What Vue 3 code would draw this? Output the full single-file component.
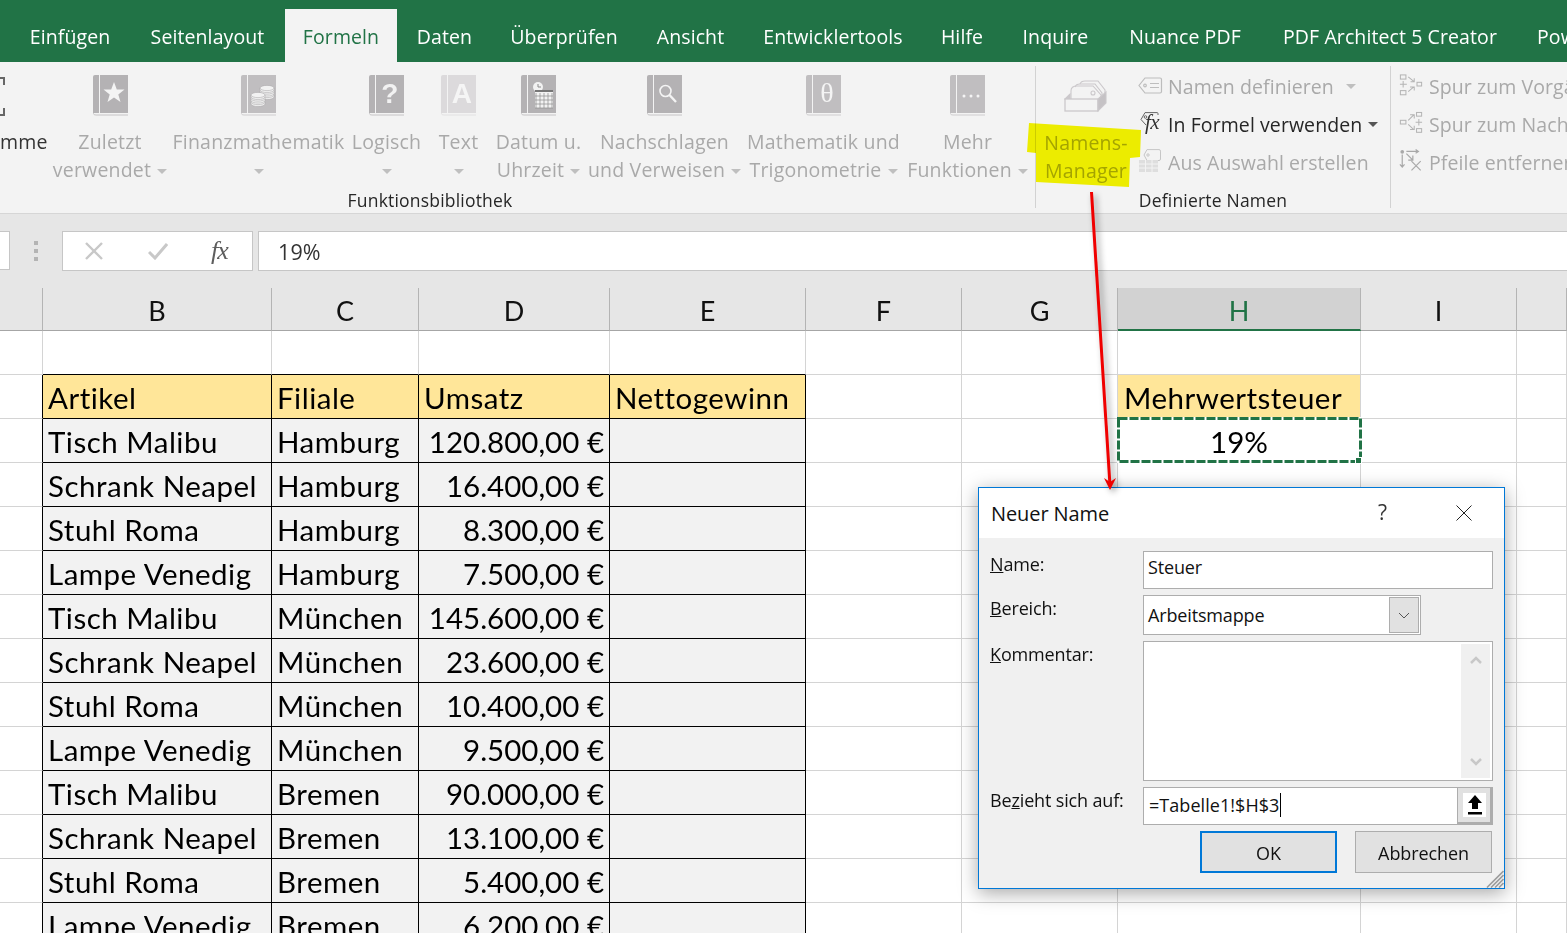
<script setup>
const tabs = [
  { t: 'Einfügen', w: 120 }, { t: 'Seitenlayout', w: 155 }, { t: 'Formeln', w: 112, active: true },
  { t: 'Daten', w: 95 }, { t: 'Überprüfen', w: 144 }, { t: 'Ansicht', w: 109 },
  { t: 'Entwicklertools', w: 176 }, { t: 'Hilfe', w: 82 }, { t: 'Inquire', w: 105 },
  { t: 'Nuance PDF', w: 154 }, { t: 'PDF Architect 5 Creator', w: 256 }, { t: 'Power Pivot', w: 120 }
]
const lib = [
  { w: 120, kind: 'star', fill: '#b4b2b4', a: 'Zuletzt', b: 'verwendet', caret: true },
  { w: 177, kind: 'coins', fill: '#c0bec0', a: 'Finanzmathematik', b: '', caret: true },
  { w: 79, kind: 'help', fill: '#b4b2b4', a: 'Logisch', b: '', caret: true },
  { w: 65, kind: 'letter', fill: '#dcdadc', a: 'Text', b: '', caret: true },
  { w: 95, kind: 'date', fill: '#b4b2b4', a: 'Datum u.', b: 'Uhrzeit', caret: true },
  { w: 157, kind: 'search', fill: '#b4b2b4', a: 'Nachschlagen', b: 'und Verweisen', caret: true },
  { w: 161, kind: 'theta', fill: '#c0bec0', a: 'Mathematik und', b: 'Trigonometrie', caret: true },
  { w: 127, kind: 'more', fill: '#c0bec0', a: 'Mehr', b: 'Funktionen', caret: true }
]
const coins = [[26, 20], [26, 16.5], [26, 13], [17, 27], [17, 23.5], [17, 20]]
const gridX = [15, 19, 23, 27, 31]
const gridY = [21, 25, 29, 33]

const colNames = ['', 'B', 'C', 'D', 'E', 'F', 'G', 'H', 'I', '']
const records = [
  ['Tisch Malibu', 'Hamburg', '120.800,00 €'], ['Schrank Neapel', 'Hamburg', '16.400,00 €'],
  ['Stuhl Roma', 'Hamburg', '8.300,00 €'], ['Lampe Venedig', 'Hamburg', '7.500,00 €'],
  ['Tisch Malibu', 'München', '145.600,00 €'], ['Schrank Neapel', 'München', '23.600,00 €'],
  ['Stuhl Roma', 'München', '10.400,00 €'], ['Lampe Venedig', 'München', '9.500,00 €'],
  ['Tisch Malibu', 'Bremen', '90.000,00 €'], ['Schrank Neapel', 'Bremen', '13.100,00 €'],
  ['Stuhl Roma', 'Bremen', '5.400,00 €'], ['Lampe Venedig', 'Bremen', '6.200,00 €']
]
const cells = []
for (let r = 1; r <= 14; r++) {
  const rec = r >= 3 ? records[r - 3] : null
  for (let c = 0; c < 10; c++) {
    const cls = []
    let text = ''
    if (c === 0 && r >= 2) cls.push('edge')
    if (c >= 1 && c <= 4) {
      if (r === 1) cls.push('top')
      else { cls.push('tbl', r === 2 ? 'head' : 'body') }
    }
    if (r === 2) text = ['', 'Artikel', 'Filiale', 'Umsatz', 'Nettogewinn'][c] || ''
    if (rec && c >= 1 && c <= 3) text = rec[c - 1]
    if (rec && c === 3) cls.push('num')
    if (c === 7 && r === 2) { cls.push('head', 'noline'); text = 'Mehrwertsteuer' }
    const ants = c === 7 && r === 3
    if (ants) { cls.push('center'); text = '19%' }
    cells.push({ id: r + '-' + c, text, cls, ants })
  }
}
</script>

<template>
  <div class="screen">
    <nav class="tabs">
      <div v-for="tab in tabs" :key="tab.t" class="tab" :class="{ active: tab.active }" :style="{ width: tab.w + 'px' }">{{ tab.t }}</div>
    </nav>

    <div class="ribbon">
      <section class="group library">
        <div class="cols">
          <div class="col first">
            <svg class="sigma" width="5" height="41" viewBox="0 0 5 41"><path d="M0 3h4v7M0 40h4v-7" fill="none" stroke="#666" stroke-width="2"/></svg>
            <div class="line dark">mme</div>
          </div>
          <div v-for="col in lib" :key="col.kind" class="col" :style="{ width: col.w + 'px' }">
            <svg class="book" width="35" height="41" viewBox="0 0 35 41">
              <path d="M2 0h4v38H0V2a2 2 0 0 1 2-2z" :fill="col.fill"/>
              <rect x="7" y="0" width="28" height="38" :fill="col.fill"/>
              <path d="M0 37c0 2 1 3 3 3h32" fill="none" :stroke="col.fill" stroke-width="1" opacity=".7"/>
              <polygon v-if="col.kind === 'star'" points="21,7 23.8,14.6 31.5,14.6 25.3,19.4 27.5,27 21,22.4 14.5,27 16.7,19.4 10.5,14.6 18.2,14.6" fill="#f4f4f4"/>
              <g v-if="col.kind === 'coins'">
                <g v-for="p in coins" :key="p[0] + '-' + p[1]">
                  <path :d="`M${p[0] - 7} ${p[1]}v2a7 2.600 0 0 0 14 0v-2z`" fill="#ececec" stroke="#a9a7a9" stroke-width=".5"/>
                  <ellipse :cx="p[0]" :cy="p[1]" rx="7" ry="2.600" fill="#f2f2f2" stroke="#a9a7a9" stroke-width=".5"/>
                </g>
              </g>
              <text v-if="col.kind === 'help'" x="21" y="28" text-anchor="middle" class="glyph-bold" fill="#f2f2f2">?</text>
              <text v-if="col.kind === 'letter'" x="21" y="28" text-anchor="middle" class="glyph-bold" fill="#f5f5f5">A</text>
              <g v-if="col.kind === 'date'">
                <circle cx="17" cy="12" r="5" fill="#f2f2f2"/>
                <path d="M17 9v3h3" fill="none" stroke="#8b8b8b" stroke-width="1"/>
                <rect x="14" y="17" width="18" height="16" fill="#f2f2f2"/>
                <path d="M14 16h18" stroke="#777" stroke-width="2"/>
                <path v-for="x in gridX" :key="'x' + x" :d="`M${x} 18v15`" stroke="#8d8d8d" stroke-width=".7"/>
                <path v-for="y in gridY" :key="'y' + y" :d="`M14 ${y}h18`" stroke="#8d8d8d" stroke-width=".7"/>
              </g>
              <g v-if="col.kind === 'search'" fill="none" stroke="#f4f4f4">
                <circle cx="18.500" cy="16" r="5.500" stroke-width="1.600"/>
                <path d="M22.500 20l6.500 7" stroke-width="2.400"/>
              </g>
              <text v-if="col.kind === 'theta'" x="21" y="27" text-anchor="middle" class="glyph-serif" fill="#f4f4f4">θ</text>
              <g v-if="col.kind === 'more'" fill="#f4f4f4">
                <circle cx="14" cy="21" r="1.500"/><circle cx="21" cy="21" r="1.500"/><circle cx="28" cy="21" r="1.500"/>
              </g>
            </svg>
            <div class="line">{{ col.a }}</div>
            <div class="line">{{ col.b }}<i v-if="col.caret" class="caret" :class="{ solo: !col.b }"></i></div>
          </div>
        </div>
        <div class="group-title lib-title">Funktionsbibliothek</div>
      </section>
      <i class="sep"></i>

      <section class="group defined">
        <div class="defined-row">
          <div class="manager">
            <svg class="drawer" width="44" height="33" viewBox="0 0 44 33" fill="none" stroke="#cbc8cb" stroke-width="1.100">
              <path d="M16 4q1-3 5-3h13l7 9v4"/>
              <path d="M11 7q1-3 5-3h15l7 9v4"/>
              <path d="M7 19v-8q0-5 6-5h16l8 9v3"/>
              <circle cx="29" cy="13" r="2"/>
              <path d="M1 19l5-5v5z" fill="#cbc8cb"/>
              <rect x="1" y="19" width="33" height="12" fill="#f3f3f3" stroke-width="1.300"/>
              <path d="M34 19l8-7v11l-8 8z" fill="#c5c2c5"/>
            </svg>
            <div class="line">Namens-</div>
            <div class="line">Manager</div>
          </div>
          <ul class="cmd-list">
            <li class="cmd">
              <svg class="cmd-icon" width="24" height="18" viewBox="0 0 24 18" fill="none" stroke="#bdbdbd" stroke-width="1.200">
                <path d="M7 1h15a1.500 1.500 0 0 1 1.500 1.500v12A1.500 1.500 0 0 1 22 16H7L1 8.500z"/>
                <circle cx="7" cy="8.500" r="1.300"/><path d="M12 6.500h9M12 10.500h9"/>
              </svg>
              <span>Namen definieren</span><i class="caret wide"></i>
            </li>
            <li class="cmd on">
              <svg class="cmd-icon" width="24" height="24" viewBox="0 0 24 24">
                <path d="M8 13L3 7.500 7 .6h12a1 1 0 0 1 1 1V3" fill="none" stroke="#666" stroke-width="1"/>
                <circle cx="7.500" cy="5" r="1.300" fill="none" stroke="#666"/>
                <text x="14" y="17" text-anchor="middle" class="fx-small" fill="#333">fx</text>
              </svg>
              <span>In Formel verwenden</span><i class="caret dark-caret"></i>
            </li>
            <li class="cmd">
              <svg class="cmd-icon raised" width="24" height="24" viewBox="0 0 24 24" fill="none" stroke="#c6c6c6">
                <path d="M9 .6h12a1.500 1.500 0 0 1 1.500 1.500v8A1.500 1.500 0 0 1 21 11.500H9L6 6z"/><circle cx="10" cy="6" r="1.200"/>
                <rect x="1" y="11" width="19" height="12" fill="#dedede" stroke="none"/>
                <path d="M1 15h19M1 19h19M7.500 11v12M14 11v12" stroke="#f3f3f3"/>
              </svg>
              <span>Aus Auswahl erstellen</span>
            </li>
          </ul>
        </div>
        <div class="group-title">Definierte Namen</div>
      </section>
      <i class="sep"></i>

      <section class="group trace">
        <ul class="cmd-list">
          <li class="cmd">
            <svg class="cmd-icon" width="26" height="26" viewBox="0 -1 26 26" fill="none" stroke="#b4b4b4" stroke-width="1.100">
              <rect x="1.500" y="0" width="6" height="4.500"/><rect x="1.500" y="17" width="6" height="4.500"/><rect x="19.500" y="8" width="5" height="4"/>
              <path d="M1 10h7.500M4.500 6.500v7M10 2l6 5M16.500 3.500V7.500h-4M10 18l6-5M12 13h4.500v4"/>
            </svg>
            <span>Spur zum Vorgängern</span>
          </li>
          <li class="cmd">
            <svg class="cmd-icon" width="26" height="26" viewBox="0 -1 26 26" fill="none" stroke="#b4b4b4" stroke-width="1.100">
              <rect x="1.500" y="8" width="6" height="4"/><rect x="19" y="-.5" width="5.500" height="4"/><rect x="19" y="17" width="5.500" height="4"/>
              <path d="M18 10h7M21.500 6.500v7M10 8l6-6M12 2h4.500v4M10 12.500l6 5.500M12 18h4.500v-4"/>
            </svg>
            <span>Spur zum Nachfolgern</span>
          </li>
          <li class="cmd">
            <svg class="cmd-icon" width="26" height="26" viewBox="0 0 26 26" fill="none" stroke="#a8a8a8" stroke-width="1.400">
              <circle cx="3.500" cy="2" r="2" fill="#a8a8a8" stroke="none"/>
              <path d="M8 1.500h13M18 -.5l3 2-3 2M3.500 5v13M1 15.500l2.500 3 2.500-3M8 4l7 7M15 6v5h-5M13.500 12l10 10M23.500 12l-10 10" stroke-width="1.300"/>
            </svg>
            <span>Pfeile entfernen</span>
          </li>
        </ul>
      </section>
    </div>

    <div class="formula-band">
      <div class="name-box"></div>
      <div class="grip"><b></b><b></b><b></b></div>
      <div class="fx-box">
        <svg width="18" height="18" viewBox="0 0 18 18"><path d="M1 1l16 16M17 1L1 17" stroke="#c8c8c8" stroke-width="2.400" fill="none"/></svg>
        <svg width="20" height="18" viewBox="0 0 20 18"><path d="M1 10l6 6L19 2" stroke="#c8c8c8" stroke-width="3" fill="none"/></svg>
        <span class="fx">fx</span>
      </div>
      <div class="formula-input">19%</div>
    </div>

    <div class="sheet">
      <div v-for="(name, i) in colNames" :key="'h' + i" class="col-head" :class="{ picked: name === 'H' }">{{ name }}</div>
      <div v-for="cell in cells" :key="cell.id" class="cell" :class="cell.cls">
        {{ cell.text }}
        <template v-if="cell.ants">
          <svg class="ants" width="245" height="46" viewBox="0 0 245 46" fill="none" stroke-width="3">
            <rect x="1.500" y="1.500" width="242" height="43" stroke="#fff"/>
            <rect x="1.500" y="1.500" width="242" height="43" stroke="#217346" stroke-dasharray="9 2"/>
          </svg>
          <i class="handle"></i>
        </template>
      </div>
    </div>

    <svg class="marker" width="1567" height="933" viewBox="0 0 1567 933">
      <polygon points="1029,123 1141,130 1140,157 1130,158 1129,187 1036,182 1036,153 1027,152" fill="#f8f800"/>
    </svg>

    <div class="dialog">
      <header class="dlg-title">
        <span>Neuer Name</span>
        <span class="dlg-help">?</span>
        <svg class="dlg-close" width="16" height="16" viewBox="0 0 16 16"><path d="M.500.500l15 15M15.500.500l-15 15" stroke="#222" fill="none"/></svg>
      </header>
      <div class="dlg-body">
        <div class="row h38"><label><u>N</u>ame:</label><div class="field">Steuer</div></div>
        <div class="row h40"><label><u>B</u>ereich:</label>
          <div class="field select">Arbeitsmappe
            <span class="drop"><svg width="12" height="7" viewBox="0 0 12 7"><path d="M1 1l5 5 5-5" stroke="#555" fill="none"/></svg></span>
          </div>
        </div>
        <div class="row h140"><label><u>K</u>ommentar:</label>
          <div class="field area">
            <div class="scroll">
              <svg width="12" height="8" viewBox="0 0 12 8"><path d="M1 7l5-5 5 5" stroke="#c8c8c8" stroke-width="2.500" fill="none"/></svg>
              <svg width="12" height="8" viewBox="0 0 12 8"><path d="M1 1l5 5 5-5" stroke="#c8c8c8" stroke-width="2.500" fill="none"/></svg>
            </div>
          </div>
        </div>
        <div class="row h38"><label>Be<u>z</u>ieht sich auf:</label>
          <div class="field refers"><span class="ref-text">=Tabelle1!$H$3</span><i class="text-caret"></i>
            <span class="pick"><span class="pick-in">
              <svg width="16" height="20" viewBox="0 0 16 20"><path d="M8 0l7 8h-4v6H5V8H1z" fill="#000"/><rect x="1" y="17" width="14" height="2.500" fill="#000"/></svg>
            </span></span>
          </div>
        </div>
        <div class="actions">
          <button class="btn primary">OK</button>
          <button class="btn">Abbrechen</button>
        </div>
      </div>
      <svg class="resize" width="18" height="18" viewBox="0 0 18 18"><path d="M17.500 1L1 17.500M17.500 5L5 17.500M17.500 9L9 17.500M17.500 13L13 17.500" stroke="#9c9c9c" stroke-width="1.600" fill="none"/></svg>
    </div>

    <svg class="arrow" width="1567" height="933" viewBox="0 0 1567 933">
      <path d="M1091.500 192L1110 486" stroke="#f00000" stroke-width="3" fill="none"/>
      <path d="M1104 478l6 12 6-12-6 4z" fill="#f00000"/>
    </svg>
  </div>
</template>

<style scoped>
.screen { position: relative; width: 1567px; height: 933px; overflow: hidden; background: #fff; font-family: "Open Sans", "Noto Sans", sans-serif; color: #222; }

.tabs { display: flex; height: 62px; padding: 9px 0 0 10px; box-sizing: border-box; background: #217346; white-space: nowrap; overflow: hidden; }
.tab { flex: none; height: 53px; padding-top: 1px; box-sizing: border-box; display: flex; align-items: center; justify-content: center; color: #fff; font-size: 19.500px; letter-spacing: .1px; }
.tab:last-child { justify-content: flex-start; padding-left: 19px; }
.tab.active { background: #f3f3f3; color: #217346; }

.ribbon { display: flex; height: 152px; box-sizing: border-box; background: #f3f3f3; border-bottom: 1px solid #d6d6d6; font-size: 19.500px; letter-spacing: .2px; color: #a9a9a9; overflow: hidden; }
.group { display: flex; flex-direction: column; justify-content: space-between; flex: none; }
.sep { flex: none; width: 1px; margin: 4px 0 5px; background: #d2d2d2; }
.library { width: 1035px; }
.cols { display: flex; padding-top: 13px; }
.col { flex: none; text-align: center; }
.col.first { width: 50px; text-align: right; padding-right: 3px; box-sizing: border-box; position: relative; }
.sigma { position: absolute; left: 0; top: 0; }
.book { display: block; margin: 0 auto 12px; }
.first .line:first-of-type { padding-top: 53px; }
.line { height: 28px; line-height: 28px; white-space: nowrap; }
.dark { color: #333; }
.caret { display: inline-block; vertical-align: middle; margin-left: 6px; border: 5px solid transparent; border-top: 5px solid #bfbfbf; border-bottom: 0; }
.caret.solo { margin-left: 0; }
.caret.wide { margin-left: 12px; }
.dark-caret { border-top-color: #555; }
.group-title { height: 24px; line-height: 24px; margin-bottom: 1px; text-align: center; font-size: 17.500px; letter-spacing: .2px; color: #262626; }
.lib-title { padding-right: 175px; }
.defined { width: 354px; }
.defined-row { display: flex; padding-top: 5px; }
.manager { flex: none; width: 100px; padding-top: 13px; text-align: center; }
.drawer { display: block; margin: 0 auto 16px 28px; }
.cmd-list { list-style: none; margin: 0; padding: 0 0 0 2px; }
.cmd { height: 38px; display: flex; align-items: center; white-space: nowrap; letter-spacing: .08px; }
.cmd.on { color: #262626; }
.cmd-icon { flex: none; margin-right: 6px; width: 24px; overflow: visible; }
.raised { margin-top: -3px; }
.trace { flex: 1; min-width: 0; padding: 5px 0 0 6px; justify-content: flex-start; }

.formula-band { display: flex; align-items: flex-start; height: 74px; padding-top: 17px; box-sizing: border-box; background: #e6e6e6; }
.name-box { flex: none; width: 10px; height: 39px; box-sizing: border-box; background: #fff; border: 1px solid #c6c6c6; border-left: 0; }
.grip { flex: none; width: 52px; height: 39px; display: flex; flex-direction: column; align-items: center; justify-content: center; gap: 4px; }
.grip b { width: 4px; height: 4px; background: #b4b4b4; }
.fx-box { flex: none; width: 191px; height: 40px; box-sizing: border-box; display: flex; align-items: center; gap: 0; padding-left: 22px; background: #fff; border: 1px solid #c6c6c6; }
.fx-box svg:nth-child(2) { margin-left: 45px; }
.fx { margin-left: 43px; font-family: "Liberation Serif", serif; font-style: italic; font-weight: 400; font-size: 26px; letter-spacing: -1px; color: #5e5e5e; line-height: 1; }
.formula-input { flex: 1; height: 40px; margin-left: 5px; padding-left: 19px; box-sizing: border-box; background: #fff; border: 1px solid #c6c6c6; border-right: 0; line-height: 39px; font-size: 21.500px; letter-spacing: .1px; color: #333; }

.sheet { display: grid; grid-template-columns: 43px 229px 147px 191px 196px 156px 156px 243px 156px 50px; grid-template-rows: 43px repeat(14, 44px); font-family: Lato, "Liberation Sans", sans-serif; color: #000; }
.col-head { box-sizing: border-box; background: #e6e6e6; border-right: 1px solid #b4b4b4; border-bottom: 1px solid #a6a6a6; text-align: center; font-size: 27px; line-height: 45px; color: #111; }
.col-head.picked { background: #d2d2d2; color: #217346; border-bottom: 2px solid #217346; }
.cell { position: relative; box-sizing: border-box; border-right: 1px solid #d4d4d4; border-bottom: 1px solid #d4d4d4; padding: 0 5px; font-size: 29.500px; letter-spacing: .5px; line-height: 45px; white-space: nowrap; }
.edge { border-right-color: #000; }
.top { border-bottom-color: #000; }
.tbl { border-right-color: #000; border-bottom-color: #000; }
.head { background: #ffe699; }
.body { background: #f2f2f2; }
.num { text-align: right; letter-spacing: 0; }
.center { text-align: center; letter-spacing: 0; }
.noline { border-bottom-color: #ffe699; padding-left: 6px; }
.ants { position: absolute; left: -1px; top: -2px; z-index: 1; }
.handle { position: absolute; right: -2px; bottom: -2px; z-index: 1; width: 5px; height: 5px; background: #217346; border: 1px solid #fff; }

.marker { position: absolute; left: 0; top: 0; pointer-events: none; mix-blend-mode: multiply; }
.arrow { position: absolute; left: 0; top: 0; z-index: 3; pointer-events: none; filter: drop-shadow(3px 3px 3px rgba(0, 0, 0, .4)); }

.dialog { position: absolute; left: 978px; top: 487px; width: 527px; height: 402px; box-sizing: border-box; border: 1px solid #0078d7; background: #f0f0f0; box-shadow: 0 4px 18px rgba(0, 0, 0, .35); font-size: 18px; letter-spacing: -.15px; color: #111; z-index: 2; }
.dlg-title { position: relative; height: 50px; padding-left: 12px; background: #fff; line-height: 52px; font-size: 20px; letter-spacing: -.1px; }
.dlg-help { position: absolute; left: 399px; top: -2px; font-size: 21px; color: #333; }
.dlg-close { position: absolute; left: 477px; top: 17px; }
.dlg-body { padding: 13px 11px 0; display: flex; flex-direction: column; gap: 6px; }
.row { display: grid; grid-template-columns: 153px 1fr; }
.row:last-of-type label { letter-spacing: 0; }
.h38 { height: 38px; }
.h40 { height: 40px; }
.h140 { height: 140px; }
.row label { line-height: 26px; white-space: nowrap; }
.field { position: relative; box-sizing: border-box; background: #fff; border: 1px solid #adadad; padding-left: 4px; line-height: 30px; }
.select { width: 278px; line-height: 38px; }
.drop { position: absolute; right: 1px; top: 1px; bottom: 1px; width: 30px; box-sizing: border-box; display: flex; align-items: center; justify-content: center; background: #e1e1e1; border: 1px solid #adadad; }
.area { padding: 0; }
.scroll { position: absolute; right: 2px; top: 2px; bottom: 2px; width: 29px; display: flex; flex-direction: column; align-items: center; justify-content: space-between; padding: 12px 0; box-sizing: border-box; background: #f0f0f0; }
.refers { display: flex; align-items: center; height: 38px; padding: 0 0 2px 5px; line-height: 30px; }
.ref-text { letter-spacing: .05px; }
.text-caret { width: 1px; height: 24px; margin-left: 1px; background: #000; }
.pick { position: absolute; right: -1px; top: -1px; bottom: -1px; width: 36px; box-sizing: border-box; padding: 5px 4px 5px 5px; background: #e1e1e1; border: 1px solid #adadad; border-width: 1px 3px 3px 1px; display: flex; }
.pick-in { flex: 1; background: #fff; display: flex; align-items: center; justify-content: center; }
.actions { display: flex; justify-content: flex-end; gap: 18px; padding-right: 1px; }
.btn { width: 137px; height: 42px; box-sizing: border-box; background: #e1e1e1; border: 1px solid #adadad; padding: 2px 0 0; font: inherit; letter-spacing: -.1px; color: #111; }
.btn.primary { border: 2px solid #0078d7; }
.resize { position: absolute; right: 0; bottom: 0; }
</style>

<style>
.glyph-bold { font-family: "Liberation Sans", sans-serif; font-weight: 700; font-size: 28px; }
.glyph-serif { font-family: "Liberation Serif", serif; font-size: 28px; }
.fx-small { font-family: "Liberation Serif", serif; font-style: italic; font-size: 21px; letter-spacing: -.5px; }
</style>
